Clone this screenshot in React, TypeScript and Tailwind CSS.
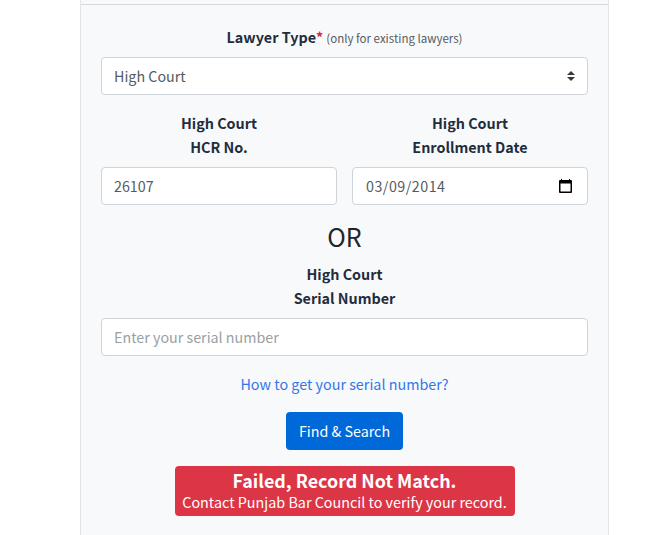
import type { ReactNode } from "react";

const field =
  "flex h-[38px] w-full items-center rounded border border-[#ced4da] bg-white px-3 text-[14.3px] leading-6 text-[#535b63]";

function Label({ children }: { children: ReactNode }) {
  return <div className="text-center text-[14.35px] font-bold leading-6 text-[#1f2d3d]">{children}</div>;
}

export default function App() {
  return (
    <div className="h-[535px] overflow-hidden bg-white pl-20 font-['Noto_Sans_CJK_SC',sans-serif] text-[#212529]">
      <main className="h-full w-[529px] border-x border-[#e2e4e6] bg-[#f8f9fb]">
        <div className="h-[5px] border-b border-[#d5d8dc]" />
        <form className="flex flex-col items-center px-5 pt-5">
          <div className="flex h-6 items-center justify-center text-[14.35px] font-bold leading-6 text-[#1f2d3d]">
            Lawyer Type<span className="text-[#d32f3f]">*</span>
            <span className="ml-[3px] pt-px text-[11.5px] font-normal text-[#535b63]">(only for existing lawyers)</span>
          </div>
          <div className={`${field} mt-2 justify-between`}>
            <span>High Court</span>
            <svg className="h-[10px] w-2" viewBox="0 0 4 5" fill="#343a40">
              <path d="M2 0L0 2h4zm0 5L0 3h4z" />
            </svg>
          </div>
          <div className="mt-4 grid w-full grid-cols-2 gap-[15px]">
            <div>
              <Label>High Court<br />HCR No.</Label>
              <div className={`${field} mt-2`}>26107</div>
            </div>
            <div>
              <Label>High Court<br />Enrollment Date</Label>
              <div className={`${field} mt-2 justify-between`}>
                <span className="pl-px tracking-[0.48px]">03/09/2014</span>
                <svg className="mr-[3px] h-[14px] w-[13px]" viewBox="0 0 13 14" fill="black">
                  <path fillRule="evenodd" d="M2 0h1v1h7V0h1v1h1q1 0 1 1v11q0 1-1 1H1q-1 0-1-1V2q0-1 1-1h1zM1.5 4.5v8h10v-8z" />
                </svg>
              </div>
            </div>
          </div>
          <h3 className="mt-3.5 h-[34px] text-[25px] leading-[34px]">OR</h3>
          <div className="mt-[9px]">
            <Label>High Court<br />Serial Number</Label>
          </div>
          <div className={`${field} mt-2`}>
            <span className="text-[#999fa3]">Enter your serial number</span>
          </div>
          <a className="mt-4 text-[14.35px] leading-6 text-[#3277e8]">How to get your serial number?</a>
          <button type="button" className="mt-4 h-[38px] w-[117px] rounded bg-[#0069d9] text-[14.3px] leading-6 text-white">
            Find &amp; Search
          </button>
          <div className="mt-4 flex h-[50px] w-[340px] flex-col items-center rounded bg-[#dc3545] pt-[3px] text-white">
            <strong className="text-[17.9px] font-bold leading-[22px]">Failed, Record Not Match.</strong>
            <span className="mt-px text-[14.35px] leading-5">Contact Punjab Bar Council to verify your record.</span>
          </div>
        </form>
      </main>
    </div>
  );
}
